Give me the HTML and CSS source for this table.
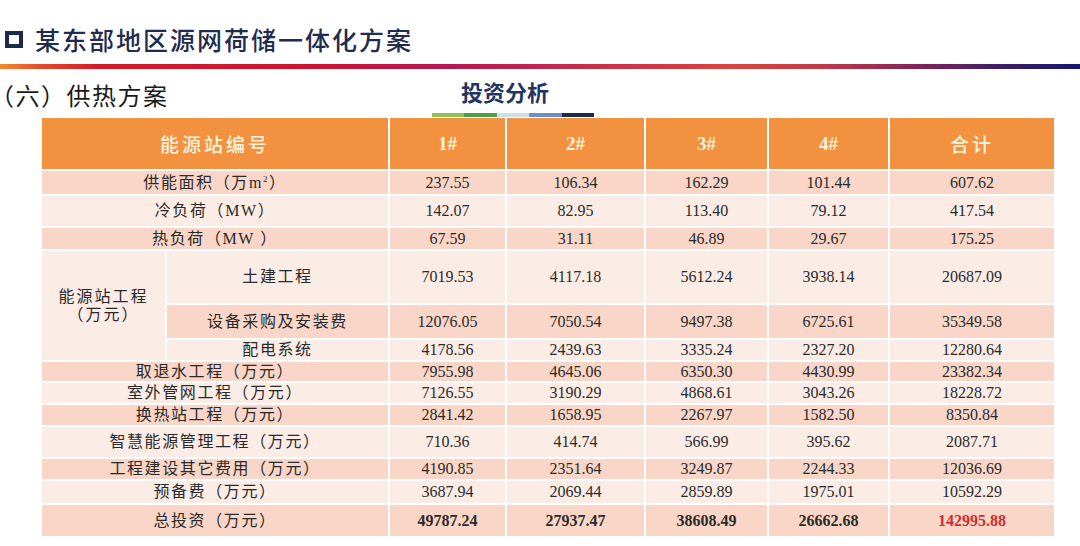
FILE: index.html
```html
<!DOCTYPE html>
<html lang="zh-CN">
<head>
<meta charset="utf-8">
<title>某东部地区源网荷储一体化方案</title>
<link rel="stylesheet" href="styles.css">
</head>
<body>
<div class="page">
  <header class="title-row">
    <span class="title-box"></span>
    <h1 class="title">某东部地区源网荷储一体化方案</h1>
  </header>
  <div class="rule"></div>
  <div class="sub-row">
    <div class="section"><span class="open">（</span>六）供热方案</div>
    <div class="analysis">
      <div class="analysis-text">投资分析</div>
      <div class="analysis-bar"></div>
    </div>
  </div>
  <table class="invest">
    <colgroup>
      <col class="c-a"><col class="c-b"><col class="c-1"><col class="c-2"><col class="c-3"><col class="c-4"><col class="c-5">
    </colgroup>
    <thead>
      <tr class="h-head">
        <th colspan="2" class="cn">能源站编号</th>
        <th>1#</th><th>2#</th><th>3#</th><th>4#</th><th class="cn">合计</th>
      </tr>
    </thead>
    <tbody>
      <tr class="dark h25"><td colspan="2" class="lbl">供能面积（万m<sup>2</sup>）</td><td>237.55</td><td>106.34</td><td>162.29</td><td>101.44</td><td>607.62</td></tr>
      <tr class="light h32"><td colspan="2" class="lbl">冷负荷（MW）</td><td>142.07</td><td>82.95</td><td>113.40</td><td>79.12</td><td>417.54</td></tr>
      <tr class="dark h23"><td colspan="2" class="lbl">热负荷（MW ）</td><td>67.59</td><td>31.11</td><td>46.89</td><td>29.67</td><td>175.25</td></tr>
      <tr class="light h54"><td rowspan="3" class="lbl group">能源站工程<br>（万元）</td><td class="lbl">土建工程</td><td>7019.53</td><td>4117.18</td><td>5612.24</td><td>3938.14</td><td>20687.09</td></tr>
      <tr class="dark h35"><td class="lbl">设备采购及安装费</td><td>12076.05</td><td>7050.54</td><td>9497.38</td><td>6725.61</td><td>35349.58</td></tr>
      <tr class="light h22"><td class="lbl">配电系统</td><td>4178.56</td><td>2439.63</td><td>3335.24</td><td>2327.20</td><td>12280.64</td></tr>
      <tr class="dark h21"><td colspan="2" class="lbl">取退水工程（万元）</td><td>7955.98</td><td>4645.06</td><td>6350.30</td><td>4430.99</td><td>23382.34</td></tr>
      <tr class="light h22"><td colspan="2" class="lbl">室外管网工程（万元）</td><td>7126.55</td><td>3190.29</td><td>4868.61</td><td>3043.26</td><td>18228.72</td></tr>
      <tr class="dark h22"><td colspan="2" class="lbl">换热站工程（万元）</td><td>2841.42</td><td>1658.95</td><td>2267.97</td><td>1582.50</td><td>8350.84</td></tr>
      <tr class="light h32"><td colspan="2" class="lbl">智慧能源管理工程（万元）</td><td>710.36</td><td>414.74</td><td>566.99</td><td>395.62</td><td>2087.71</td></tr>
      <tr class="dark h22"><td colspan="2" class="lbl">工程建设其它费用（万元）</td><td>4190.85</td><td>2351.64</td><td>3249.87</td><td>2244.33</td><td>12036.69</td></tr>
      <tr class="light h24"><td colspan="2" class="lbl">预备费（万元）</td><td>3687.94</td><td>2069.44</td><td>2859.89</td><td>1975.01</td><td>10592.29</td></tr>
      <tr class="dark h33 total"><td colspan="2" class="lbl">总投资（万元）</td><td>49787.24</td><td>27937.47</td><td>38608.49</td><td>26662.68</td><td class="grand">142995.88</td></tr>
    </tbody>
  </table>
</div>
</body>
</html>
```

FILE: styles.css
```css
html, body {
  margin: 0;
  padding: 0;
  background: #ffffff;
}

.page {
  width: 1080px;
  height: 546px;
  overflow: hidden;
  font-family: "Liberation Serif", "Noto Sans CJK SC", serif;
  color: #2a2a2a;
}

.title-row {
  display: flex;
  align-items: center;
  height: 64px;
  padding-left: 5px;
  box-sizing: border-box;
  padding-top: 14px;
}

.title-box {
  width: 18px;
  height: 17px;
  box-sizing: border-box;
  border: 4px solid #1c2a4e;
  margin-right: 12px;
}

.title {
  margin: 0;
  font-family: "Noto Sans CJK SC", sans-serif;
  font-weight: 500;
  font-size: 25px;
  line-height: 32px;
  letter-spacing: 2px;
  color: #1f2c4f;
}

.rule {
  height: 5px;
  background: linear-gradient(to right,
    #f08a32 0%,
    #e2482c 4%,
    #d41a28 9%,
    #cc1430 28%,
    #b41852 42%,
    #c42a4c 52%,
    #d6463e 68%,
    #c03a48 76%,
    #82245a 85%,
    #3a1e66 93%,
    #141672 100%);
}

.sub-row {
  display: flex;
  align-items: flex-start;
  height: 49px;
}

.section {
  flex: 0 0 430px;
  margin-top: 12px;
  padding-left: 2px;
  font-family: "Noto Sans CJK SC", sans-serif;
  font-size: 24px;
  line-height: 28px;
  letter-spacing: 1.5px;
  color: #1a1a1a;
}

.section .open {
  font-feature-settings: "halt";
}

.analysis {
  width: 162px;
  display: flex;
  flex-direction: column;
  align-items: center;
}

.analysis-text {
  margin-top: 9px;
  padding-right: 16px;
  font-family: "Noto Sans CJK SC", sans-serif;
  font-weight: 700;
  font-size: 22px;
  line-height: 26px;
  color: #1f3563;
}

.analysis-bar {
  margin-top: 9px;
  width: 162px;
  height: 4px;
  background: linear-gradient(to right,
    #8fc15a 0, #8fc15a 20%,
    #4da04a 20%, #4da04a 40%,
    #cfdcea 40%, #cfdcea 60%,
    #6f8fc2 60%, #6f8fc2 80%,
    #1c2b48 80%, #1c2b48 100%);
}

.invest {
  margin-left: 42px;
  width: 1012px;
  table-layout: fixed;
  border-collapse: separate;
  border-spacing: 0;
  font-size: 16px;
}

.c-a { width: 125px; }
.c-b { width: 223px; }
.c-1 { width: 117px; }
.c-2 { width: 139px; }
.c-3 { width: 123px; }
.c-4 { width: 121px; }
.c-5 { width: 164px; }

.invest th,
.invest td {
  padding: 0;
  text-align: center;
  vertical-align: middle;
  border-right: 2px solid #ffffff;
  border-bottom: 2px solid #ffffff;
  line-height: 18px;
  white-space: nowrap;
}

.invest th:last-child,
.invest td:last-child {
  border-right: 0;
}

.invest th {
  background: #f2913f;
  color: #fff2dc;
  font-weight: 700;
  font-size: 19px;
}

.invest th.cn {
  font-family: "Noto Sans CJK SC", sans-serif;
  font-weight: 500;
  letter-spacing: 3px;
}

.h-head { height: 53px; }
.h21 { height: 21px; }
.h22 { height: 22px; }
.h23 { height: 23px; }
.h24 { height: 24px; }
.h25 { height: 25px; }
.h32 { height: 32px; }
.h33 { height: 33px; }
.h35 { height: 35px; }
.h54 { height: 54px; }

.dark td { background: #f9d6c7; }
.light td { background: #fcece6; }

.lbl {
  font-family: "Liberation Serif", "Noto Sans CJK SC", serif;
  letter-spacing: 1.6px;
  color: #2a2a2a;
}

.lbl sup {
  font-size: 9px;
  line-height: 0;
  vertical-align: 6px;
}

.group {
  line-height: 21px;
  white-space: normal;
  letter-spacing: 2px;
}

.total td {
  font-weight: 700;
}

.total td.lbl {
  font-weight: 400;
}

.total td.grand {
  color: #d42a2e;
}
```
